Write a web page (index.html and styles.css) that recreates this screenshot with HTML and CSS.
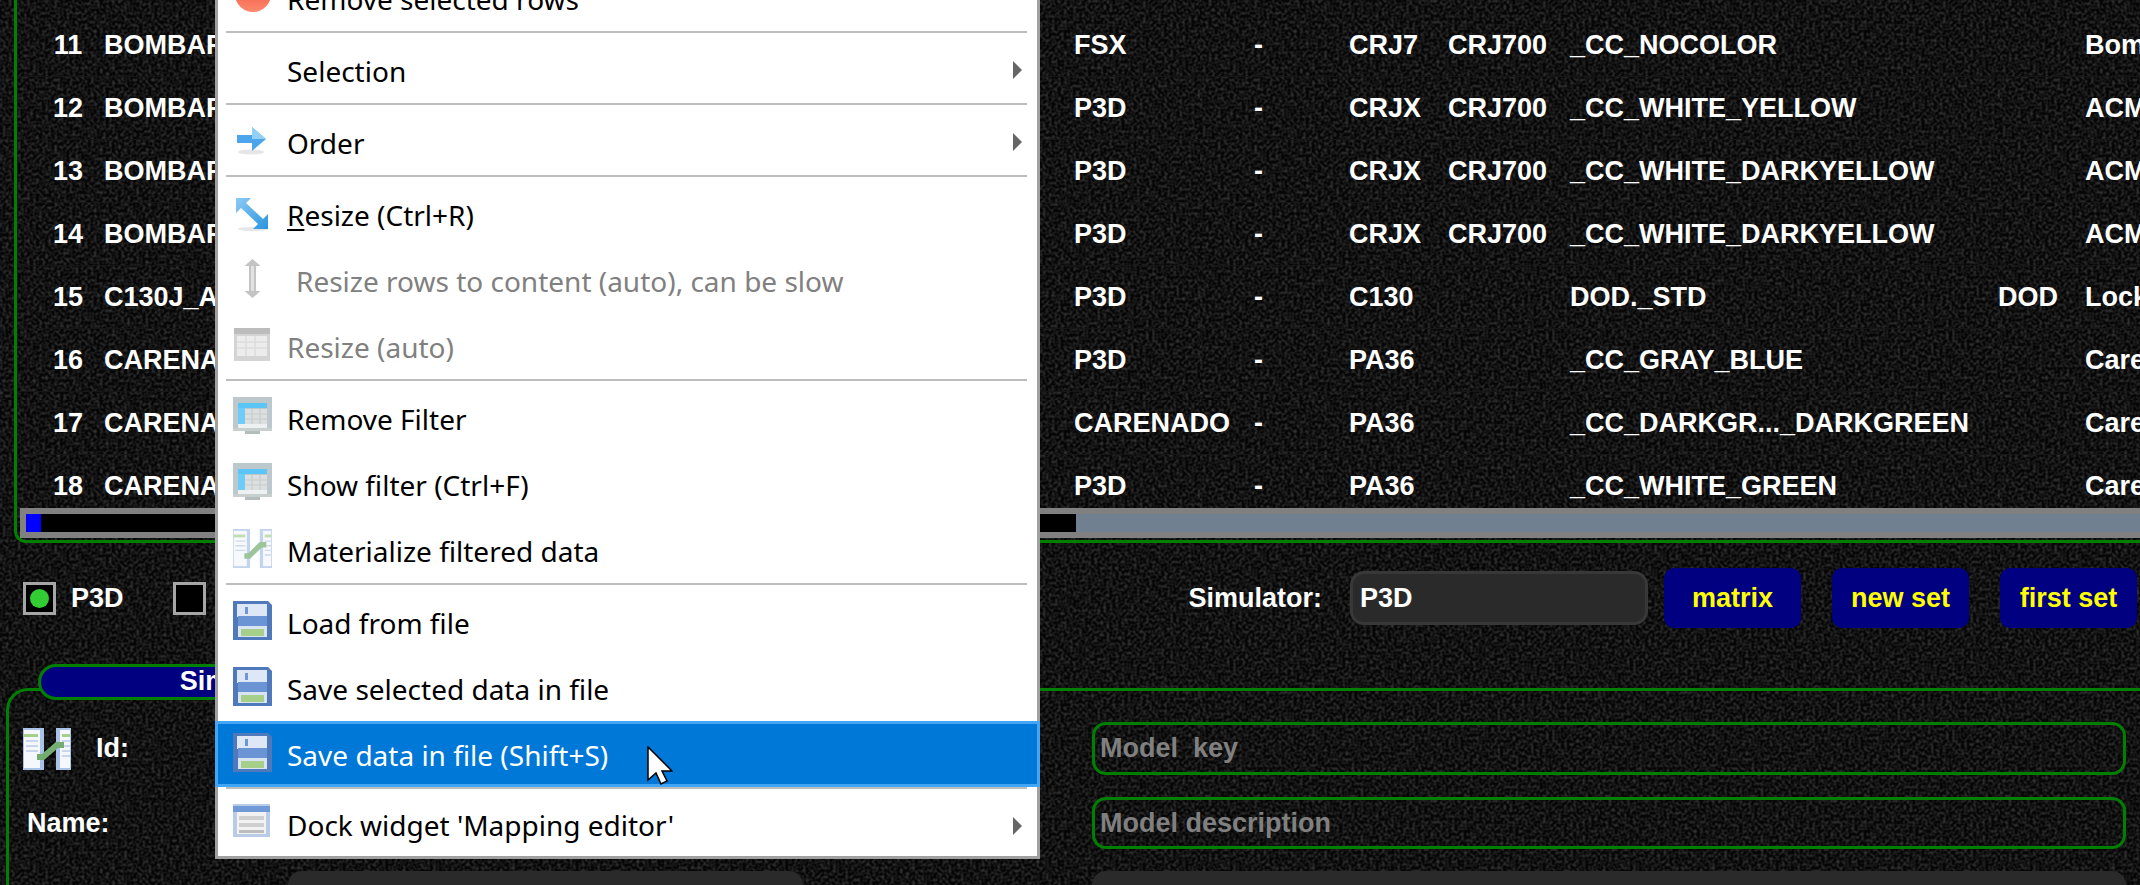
FILE: index.html
```html
<!DOCTYPE html>
<html lang="en">
<head>
    <meta charset="UTF-8">
    <title>Mapping editor</title>
    <link rel="stylesheet" href="styles.css">
</head>
<body>
    <svg class="icon-defs" width="0" height="0">
        <defs>
            <linearGradient id="red" x1="0" y1="0" x2="0" y2="1"><stop offset="0" stop-color="#e8442a"/><stop offset="1" stop-color="#ff8a70"/></linearGradient>
            <linearGradient id="diag" x1="0" y1="0" x2="1" y2="1"><stop offset="0" stop-color="#8ccbf5"/><stop offset="1" stop-color="#2a94de"/></linearGradient>
            <symbol id="ic-remove" viewBox="0 0 39 39"><circle cx="20" cy="17" r="18" fill="url(#red)"/></symbol>
            <symbol id="ic-arrow" viewBox="0 0 39 39">
                <ellipse cx="18" cy="31" rx="13" ry="2.500" fill="#e6e6e6"/>
                <path d="M4 14h15V6l14 12-14 12v-8H4z" fill="#4da6ec"/>
                <path d="M19 6l14 12H19z" fill="#93d0f8"/>
            </symbol>
            <symbol id="ic-resize" viewBox="0 0 39 39">
                <ellipse cx="20" cy="36" rx="15" ry="2" fill="#e6e6e6"/>
                <path d="M3 5h15l-5 5 17 16 5-5v15H20l5-5L8 15l-5 5z" fill="url(#diag)"/>
            </symbol>
            <symbol id="ic-rows" viewBox="0 0 39 39">
                <path d="M19.500 0l8 7h-4.500v25h4.500l-8 7-8-7h4.500V7h-4.500z" fill="#c4c4c4"/>
                <path d="M18 7h3v25h-3z" fill="#e2e2e2"/>
            </symbol>
            <symbol id="ic-auto" viewBox="0 0 39 39">
                <rect x="1" y="3" width="36" height="33" fill="#d4d4d4"/>
                <rect x="1" y="3" width="36" height="6" fill="#bcbcbc"/>
                <path d="M4 11h30v20H4z" fill="#ececec"/>
                <path d="M4 17h30M4 23h30M13 11v20M22 11v20" stroke="#dcdcdc" stroke-width="1.500"/>
            </symbol>
            <symbol id="ic-filter" viewBox="0 0 39 39">
                <rect width="39" height="31" fill="#bcc8cc"/>
                <rect x="5" y="6" width="29" height="5" fill="#5cc5f7"/>
                <rect x="5" y="11" width="7" height="16" fill="#6ccdf8"/>
                <rect x="12" y="12" width="22" height="15" fill="#dcdfdf"/>
                <path d="M12 17h22M12 22h22M19 12v15M27 12v15" stroke="#c8cccc" stroke-width="1.200"/>
                <rect x="5" y="27" width="29" height="4" fill="#eef1f1"/>
                <rect x="12" y="31" width="15" height="6" fill="#b4bcbc"/>
                <rect y="31" width="39" height="3" fill="#c8cfcf"/>
            </symbol>
            <symbol id="ic-link" viewBox="0 0 48 42" preserveAspectRatio="none">
                <rect width="21" height="42" fill="#a9c3e8"/>
                <rect x="33" width="15" height="42" fill="#a9c3e8"/>
                <rect x="1" y="2" width="16" height="38" fill="#f4f7fc"/>
                <rect x="37" y="2" width="10" height="38" fill="#f4f7fc"/>
                <rect x="1" y="6" width="14" height="3" fill="#a6cf8a"/>
                <rect x="39" y="6" width="8" height="3" fill="#a6cf8a"/>
                <path d="M3 13h12M3 18h12M3 23h12M39 13h8M39 18h8M39 23h8M39 28h8" stroke="#b8cbe6" stroke-width="1.500"/>
                <path d="M14 29h6L34 17h7" fill="none" stroke="#74ad70" stroke-width="6"/>
            </symbol>
            <symbol id="ic-save" viewBox="0 0 39 39">
                <path d="M0 0h35l4 4v35H0z" fill="#4f79bb"/>
                <rect x="4" y="3" width="30" height="13" fill="#dde7f5"/>
                <rect x="12" y="6" width="3" height="7" fill="#6e96d4"/>
                <rect x="5" y="15" width="29" height="10" fill="#6a94d4"/>
                <rect x="5" y="25" width="29" height="11" fill="#d8e4f2"/>
                <rect x="8" y="28" width="23" height="7" fill="#a6cf8a"/>
            </symbol>
            <symbol id="ic-dock" viewBox="0 0 39 39">
                <rect y="1" width="37" height="33" fill="#b9cbe6"/>
                <rect y="3" width="37" height="6" fill="#7099d8"/>
                <rect x="4" y="9" width="29" height="22" fill="#f2f2f2"/>
                <rect x="6" y="13" width="25" height="4" fill="#cfcfcf"/>
                <rect x="6" y="20" width="25" height="4" fill="#cfcfcf"/>
                <rect x="6" y="27" width="25" height="3" fill="#bdbdbd"/>
            </symbol>
        </defs>
    </svg>

    <div class="table-group">
        <div class="table-view">
            <table class="models">
                <colgroup>
                    <col class="c-num"><col class="c-name"><col class="c-sim"><col class="c-dash"><col class="c-icao"><col class="c-family"><col class="c-livery"><col class="c-dod"><col class="c-mfr">
                </colgroup>
                <tr><td class="num">11</td><td>BOMBARDIER</td><td>FSX</td><td>-</td><td>CRJ7</td><td>CRJ700</td><td>_CC_NOCOLOR</td><td></td><td>Bombardier</td></tr>
                <tr><td class="num">12</td><td>BOMBARDIER</td><td>P3D</td><td>-</td><td>CRJX</td><td>CRJ700</td><td>_CC_WHITE_YELLOW</td><td></td><td>ACME</td></tr>
                <tr><td class="num">13</td><td>BOMBARDIER</td><td>P3D</td><td>-</td><td>CRJX</td><td>CRJ700</td><td>_CC_WHITE_DARKYELLOW</td><td></td><td>ACME</td></tr>
                <tr><td class="num">14</td><td>BOMBARDIER</td><td>P3D</td><td>-</td><td>CRJX</td><td>CRJ700</td><td>_CC_WHITE_DARKYELLOW</td><td></td><td>ACME</td></tr>
                <tr><td class="num">15</td><td>C130J_AEROSOFT</td><td>P3D</td><td>-</td><td>C130</td><td></td><td>DOD._STD</td><td>DOD</td><td>Lockheed</td></tr>
                <tr><td class="num">16</td><td>CARENADO</td><td>P3D</td><td>-</td><td>PA36</td><td></td><td>_CC_GRAY_BLUE</td><td></td><td>Carenado</td></tr>
                <tr><td class="num">17</td><td>CARENADO</td><td>CARENADO</td><td>-</td><td>PA36</td><td></td><td>_CC_DARKGR..._DARKGREEN</td><td></td><td>Carenado</td></tr>
                <tr><td class="num">18</td><td>CARENADO</td><td>P3D</td><td>-</td><td>PA36</td><td></td><td>_CC_WHITE_GREEN</td><td></td><td>Carenado</td></tr>
            </table>
        </div>
        <div class="hscroll">
            <div class="hscroll-arrow"></div>
            <div class="hscroll-handle"></div>
        </div>
    </div>

    <div class="controls">
        <label class="radio-item"><span class="radio on"></span>P3D</label>
        <label class="radio-item"><span class="radio"></span>FSX</label>
        <div class="sim-select">
            <span>Simulator:</span>
            <div class="combo">P3D</div>
            <div class="btn">matrix</div>
            <div class="btn">new set</div>
            <div class="btn">first set</div>
        </div>
    </div>

    <div class="sim-group">
        <div class="pill">Simulator</div>
        <div class="form">
            <div class="id-cell">
                <svg class="id-icon"><use href="#ic-link"/></svg>
                <span>Id:</span>
            </div>
            <div class="field outline col-right">Model&nbsp; key</div>
            <div class="name-cell">Name:</div>
            <div class="field outline col-right">Model description</div>
            <div class="field solid col-mid"></div>
            <div class="field solid col-right"></div>
        </div>
    </div>

    <div class="menu">
        <div class="item"><svg class="ico"><use href="#ic-remove"/></svg><span>Remove selected rows</span></div>
        <div class="sep"></div>
        <div class="item sub"><i class="ico"></i><span>Selection</span></div>
        <div class="sep"></div>
        <div class="item sub"><svg class="ico"><use href="#ic-arrow"/></svg><span>Order</span></div>
        <div class="sep"></div>
        <div class="item"><svg class="ico"><use href="#ic-resize"/></svg><span><u>R</u>esize (Ctrl+R)</span></div>
        <div class="item off indent"><svg class="ico"><use href="#ic-rows"/></svg><span>Resize rows to content (auto), can be slow</span></div>
        <div class="item off"><svg class="ico"><use href="#ic-auto"/></svg><span>Resize (auto)</span></div>
        <div class="sep"></div>
        <div class="item"><svg class="ico"><use href="#ic-filter"/></svg><span>Remove Filter</span></div>
        <div class="item"><svg class="ico"><use href="#ic-filter"/></svg><span>Show filter (Ctrl+F)</span></div>
        <div class="item"><svg class="ico faded"><use href="#ic-link"/></svg><span>Materialize filtered data</span></div>
        <div class="sep"></div>
        <div class="item"><svg class="ico"><use href="#ic-save"/></svg><span>Load from file</span></div>
        <div class="item"><svg class="ico"><use href="#ic-save"/></svg><span>Save selected data in file</span></div>
        <div class="item active"><svg class="ico"><use href="#ic-save"/></svg><span>Save data in file (Shift+S)</span></div>
        <div class="sep"></div>
        <div class="item sub last"><svg class="ico"><use href="#ic-dock"/></svg><span>Dock widget 'Mapping editor'</span></div>
    </div>

    <svg class="cursor" width="26" height="40" viewBox="0 0 26 40">
        <path d="M1 1v33l8-7 5 11 6-3-5-10h10z" fill="#fff" stroke="#000" stroke-width="1.500"/>
    </svg>
</body>
</html>
```

FILE: styles.css
```css
html, body {
    height: 885px;
    overflow: hidden;
}
body {
    margin: 0;
    position: relative;
    background-color: #060606;
    background-image: url("data:image/svg+xml,%3Csvg xmlns='http://www.w3.org/2000/svg' width='400' height='400'%3E%3Cfilter id='n'%3E%3CfeTurbulence type='fractalNoise' baseFrequency='.33' numOctaves='1' seed='4' stitchTiles='stitch'/%3E%3CfeColorMatrix values='0 0 0 0 1 0 0 0 0 1 0 0 0 0 1 .42 0 0 0 -.16'/%3E%3C/filter%3E%3Crect width='400' height='400' filter='url(%23n)'/%3E%3C/svg%3E");
    font-family: "Liberation Sans", Arial, sans-serif;
    font-weight: bold;
    font-size: 27px;
    color: white;
}
.icon-defs {
    display: block;
}

/* models table */
.table-group {
    width: 2300px;
    margin-left: 14px;
    padding-bottom: 2px;
    border: 3px solid green;
    border-top: none;
    border-radius: 0 0 12px 12px;
}
.table-view {
    height: 508px;
    padding-top: 13px;
    box-sizing: border-box;
    overflow: hidden;
}
.models {
    width: 2260px;
    table-layout: fixed;
    border-collapse: collapse;
}
.c-num { width: 79px; }
.c-name { width: 970px; }
.c-sim { width: 180px; }
.c-dash { width: 95px; }
.c-icao { width: 99px; }
.c-family { width: 122px; }
.c-livery { width: 428px; }
.c-dod { width: 87px; }
.c-mfr { width: 200px; }
.models td {
    height: 63px;
    padding: 2px 0 0 8px;
    box-sizing: border-box;
    border-bottom: 1px solid #161616;
    white-space: nowrap;
    overflow: hidden;
}
.models td.num {
    padding-left: 23px;
    text-align: center;
}
.hscroll {
    display: flex;
    width: 2270px;
    height: 30px;
    margin-left: 3px;
    box-sizing: border-box;
    border: 6px solid gray;
    background-color: slategray;
}
.hscroll-arrow {
    width: 15px;
    background-color: blue;
}
.hscroll-handle {
    width: 1035px;
    background-color: black;
}

/* radio buttons and simulator selector */
.controls {
    display: flex;
    align-items: center;
    gap: 49px;
    width: 2137px;
    height: 60px;
    margin-top: 25px;
    padding-left: 23px;
    box-sizing: border-box;
}
.radio-item {
    display: flex;
    align-items: center;
    gap: 15px;
}
.radio {
    display: flex;
    justify-content: center;
    align-items: center;
    width: 33px;
    height: 33px;
    box-sizing: border-box;
    border: 3px solid #a6a6a6;
    background-color: black;
}
.radio.on::after {
    content: "";
    width: 19px;
    height: 19px;
    border-radius: 50%;
    background-color: limegreen;
}
.sim-select {
    display: flex;
    align-items: center;
    margin-left: auto;
}
.combo {
    width: 298px;
    height: 54px;
    margin-left: 28px;
    padding-left: 7px;
    box-sizing: border-box;
    border: 3px solid #383838;
    border-radius: 14px;
    background-color: #2a2a2a;
    line-height: 48px;
}
.btn {
    width: 137px;
    height: 60px;
    margin-left: 31px;
    border-radius: 10px;
    background-color: #000080;
    color: yellow;
    text-align: center;
    line-height: 60px;
}
.combo + .btn {
    margin-left: 16px;
}

/* lower group box */
.sim-group {
    width: 2300px;
    height: 300px;
    margin: 60px 0 0 6px;
    border: 3px solid green;
    border-right: none;
    border-radius: 22px 0 0 0;
}
.pill {
    width: 408px;
    height: 36px;
    margin: -27px 0 0 29px;
    box-sizing: border-box;
    border: 3px solid green;
    border-radius: 18px;
    background-color: #000080;
    text-align: center;
    line-height: 28px;
}
.form {
    display: grid;
    grid-template-columns: 279px 515px 289px 1034px;
    grid-template-rows: 53px 52px 52px;
    row-gap: 22px;
    margin-top: 22px;
    align-items: center;
}
.id-cell {
    display: flex;
    align-items: center;
    gap: 25px;
    padding-left: 14px;
}
.id-icon {
    width: 48px;
    height: 42px;
}
.name-cell {
    padding-left: 18px;
}
.field {
    height: 100%;
    box-sizing: border-box;
    border-radius: 14px;
}
.outline {
    padding-left: 5px;
    border: 3px solid green;
    color: gray;
    line-height: 46px;
}
.solid {
    background-color: #2a2a2a;
}
.col-right {
    grid-column: 4;
}
.col-mid {
    grid-column: 2;
}

/* context menu */
.menu {
    position: absolute;
    left: 215px;
    top: -38px;
    width: 825px;
    box-sizing: border-box;
    border: 3px solid #a0a0a0;
    background-color: white;
    font-family: "Noto Sans", sans-serif;
    font-weight: normal;
    font-size: 28px;
    color: black;
}
.sep {
    height: 2px;
    margin: 0 10px 4px 8px;
    background-color: #bdbdbd;
}
.item {
    display: flex;
    align-items: center;
    height: 66px;
    padding-left: 15px;
    box-sizing: border-box;
    position: relative;
    white-space: nowrap;
}
.item span {
    margin: 1px 0 0 15px;
}
.item u {
    text-underline-offset: 3px;
}
.ico {
    display: block;
    flex: none;
    width: 39px;
    height: 39px;
    margin-top: -4px;
}
.faded {
    opacity: .7;
}
.off {
    color: #808080;
}
.indent span {
    margin-left: 24px;
}
.sub::after {
    content: "";
    position: absolute;
    left: 795px;
    top: 24px;
    border-left: 9px solid #666;
    border-top: 9px solid transparent;
    border-bottom: 9px solid transparent;
}
.active {
    margin: 0 -3px;
    padding-left: 15px;
    border: 3px solid #42a5f5;
    background-color: #0078d7;
    color: white;
}
.last {
    height: 63px;
}
.cursor {
    position: absolute;
    left: 647px;
    top: 746px;
}
```
